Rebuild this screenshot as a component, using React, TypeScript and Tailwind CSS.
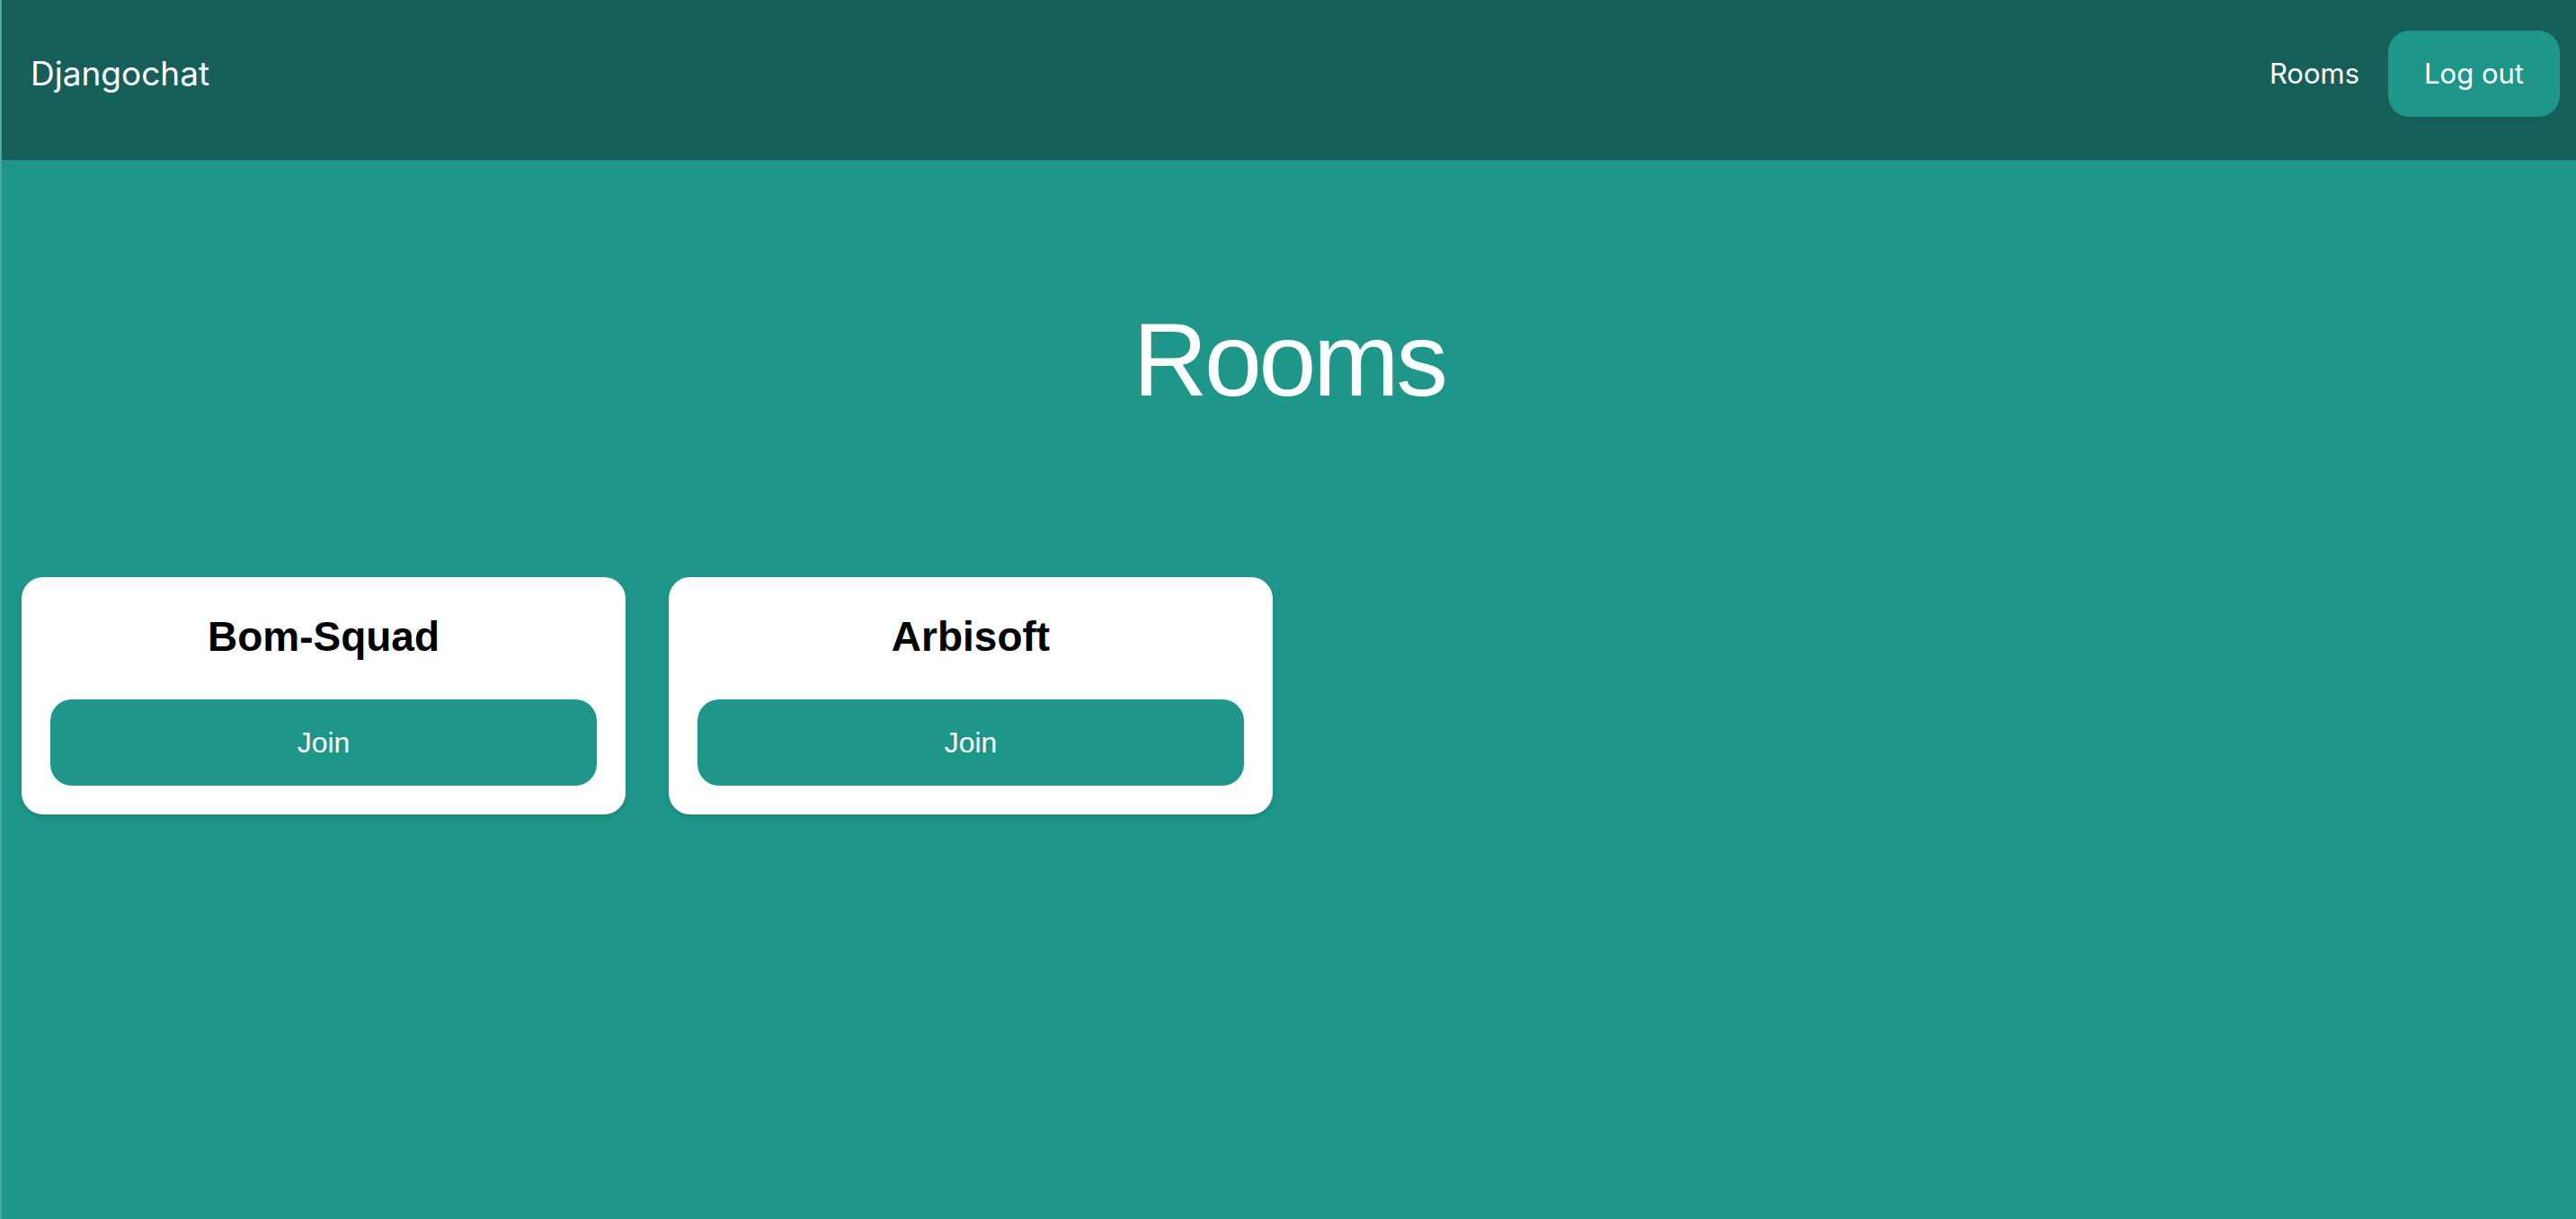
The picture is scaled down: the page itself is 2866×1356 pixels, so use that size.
const rooms = [{ name: 'Bom-Squad' }, { name: 'Arbisoft' }];

function Navbar() {
  return (
    <nav className="flex h-[178px] items-center justify-between bg-[#165e5a] pb-[14px] pl-8 pr-[18px]">
      <a href="#" className="text-[37px] text-white">
        Djangochat
      </a>
      <div className="flex items-center gap-8">
        <a href="#" className="text-[31px] text-white">
          Rooms
        </a>
        <button
          type="button"
          className="h-24 rounded-[24px] bg-[#1e9689] px-10 text-[31px] text-white"
        >
          Log out
        </button>
      </div>
    </nav>
  );
}

function RoomCard({ name }: { name: string }) {
  return (
    <div className="w-[672px] rounded-[24px] bg-white px-8 pb-8 pt-[38px] shadow-md">
      <h2 className="mb-[42px] text-center text-[46px] font-bold leading-[56px] text-black">
        {name}
      </h2>
      <button
        type="button"
        className="h-24 w-full rounded-[24px] bg-[#1e9689] text-[32px] text-white"
      >
        Join
      </button>
    </div>
  );
}

export default function App() {
  return (
    <div className="min-h-screen border-l-2 border-white/20 bg-[#1e9689] font-['Inter',sans-serif]">
      <Navbar />
      <main>
        <h1 className="pt-[165px] text-center font-['Liberation_Sans',sans-serif] text-[115px] leading-none tracking-[-0.03em] text-white">
          Rooms
        </h1>
        <div className="flex gap-12 px-[22px] pt-[184px] font-['Liberation_Sans',sans-serif]">
          {rooms.map((room) => (
            <RoomCard key={room.name} name={room.name} />
          ))}
        </div>
      </main>
    </div>
  );
}
